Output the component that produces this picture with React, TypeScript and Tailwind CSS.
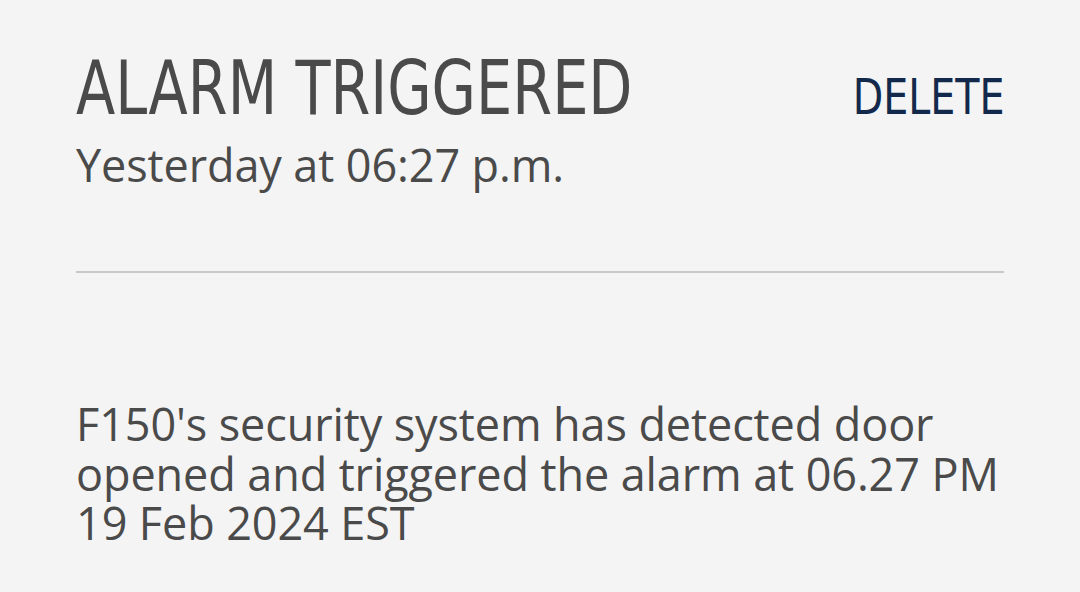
export default function App() {
  return (
    <div className="h-[592px] w-[1080px] overflow-hidden bg-[#f4f4f4] pl-[76px] pr-[76px] text-[#4a4a4a]">
      <div className="flex items-baseline justify-between pt-[51px]">
        <h1 className="origin-left scale-x-[0.85] whitespace-nowrap font-['DejaVu_Sans_Condensed',sans-serif] text-[75px] leading-[75px]">
          ALARM TRIGGERED
        </h1>
        <button className="origin-right scale-x-[0.88] font-['DejaVu_Sans_Condensed',sans-serif] text-[50px] leading-[50px] text-[#13294b]">
          DELETE
        </button>
      </div>
      <p className="mt-[14px] font-['Open_Sans',sans-serif] text-[45px] leading-[50px] tracking-[-0.1px]">
        Yesterday at 06:27 p.m.
      </p>
      <div className="mt-[81px] h-[2px] bg-[#c8c8c8]" />
      <p className="mt-[126px] font-['Open_Sans',sans-serif] text-[45px] leading-[49.5px] tracking-[-0.1px]">
        F150's security system has detected door opened and triggered the alarm at 06.27 PM 19 Feb 2024 EST
      </p>
    </div>
  )
}
